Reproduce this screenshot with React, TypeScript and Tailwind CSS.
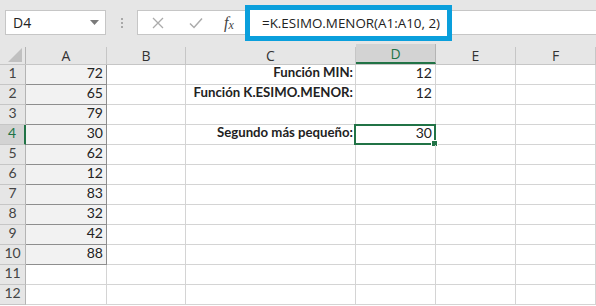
import React from "react";

const colA = [72, 65, 79, 30, 62, 12, 83, 32, 42, 88];

const cLabels: Record<number, string> = {
  1: "Función MIN:",
  2: "Función K.ESIMO.MENOR:",
  4: "Segundo más pequeño:",
};
const dVals: Record<number, string> = { 1: "12", 2: "12", 4: "30" };

function Row({ n }: { n: number }) {
  const active = n === 4;
  const a = n <= 10 ? colA[n - 1] : null;
  return (
    <div className="flex h-[20px] whitespace-nowrap">
      <div
        className={
          "w-[26px] shrink-0 flex items-end justify-center pb-[1px] text-[14px] border-b border-[#c6c6c6] " +
          (active
            ? "bg-[#d3d3d3] text-[#217346] border-r-2 border-r-[#217346]"
            : "bg-[#e6e6e6] text-[#444] border-r border-r-[#b4b4b4]")
        }
      >
        {n}
      </div>
      <div
        className={
          "w-[81px] shrink-0 flex items-end justify-end pr-[3px] pb-[1px] text-[14px] " +
          (a !== null
            ? "bg-[#f2f2f2] border-r border-b border-[#8e8e8e]"
            : "border-r border-b border-[#d4d4d4]")
        }
      >
        {a}
      </div>
      <div className="w-[79px] shrink-0 border-r border-b border-[#d4d4d4]" />
      <div className="w-[170px] shrink-0 border-r border-b border-[#d4d4d4] flex items-end justify-end pr-[2px] pb-[1px] text-[13.2px] font-bold">
        {cLabels[n] ?? ""}
      </div>
      <div className="w-[80px] shrink-0 border-r border-b border-[#d4d4d4] flex items-end justify-end pr-[3px] pb-[1px] text-[14px] relative">
        {dVals[n] ?? ""}
        {active && (
          <>
            <div className="absolute left-[-2px] top-[-1px] w-[82px] h-[21px] border-2 border-[#217346]" />
            <div className="absolute right-[-3px] bottom-[-3px] w-[5px] h-[5px] bg-[#217346] border border-white box-content" />
          </>
        )}
      </div>
      <div className="w-[80px] shrink-0 border-r border-b border-[#d4d4d4]" />
      <div className="w-[80px] shrink-0 border-r border-b border-[#d4d4d4]" />
    </div>
  );
}

export default function App() {
  const headers: { label: string; w: string; sel?: boolean }[] = [
    { label: "A", w: "w-[81px]" },
    { label: "B", w: "w-[79px]" },
    { label: "C", w: "w-[170px]" },
    { label: "D", w: "w-[80px]", sel: true },
    { label: "E", w: "w-[80px]" },
    { label: "F", w: "w-[80px]" },
  ];
  return (
    <div
      className="w-[596px] h-[306px] overflow-hidden bg-white text-[#222] relative"
      style={{ fontFamily: "Lato, 'Open Sans', sans-serif" }}
    >
      {/* Top formula bar */}
      <div className="h-[44px] bg-[#e6e6e6] flex items-start pt-[10px] pl-[5px]">
        <div
          className="w-[101px] h-[25px] bg-white border border-[#c6c6c6] flex items-center pl-[7px] pr-[6px] text-[14px] text-[#222]"
          style={{ fontFamily: "'Open Sans', sans-serif" }}
        >
          <span className="flex-1">D4</span>
          <svg width="9" height="5" viewBox="0 0 9 5">
            <path d="M0 0 L9 0 L4.5 5 Z" fill="#7a7a7a" />
          </svg>
        </div>
        <div className="w-[31px] h-[25px] flex flex-col items-center justify-center gap-[2px]">
          <div className="w-[2px] h-[2px] bg-[#a8a8a8]" />
          <div className="w-[2px] h-[2px] bg-[#a8a8a8]" />
          <div className="w-[2px] h-[2px] bg-[#a8a8a8]" />
        </div>
        <div className="flex-1 h-[25px] bg-white border border-[#c6c6c6] border-r-0 flex items-center">
          <div className="w-[40px] flex justify-center">
            <svg width="12" height="12" viewBox="0 0 12 12">
              <path d="M1 1 L11 11 M11 1 L1 11" stroke="#ababab" strokeWidth="1.3" />
            </svg>
          </div>
          <div className="w-[36px] flex justify-center">
            <svg width="14" height="12" viewBox="0 0 14 12">
              <path d="M1 6.5 L5 10.5 L13 1.5" stroke="#ababab" strokeWidth="1.5" fill="none" />
            </svg>
          </div>
          <div
            className="w-[30px] flex justify-center items-baseline italic text-[#444]"
            style={{ fontFamily: "'Liberation Serif', serif" }}
          >
            <span className="text-[16px]">f</span>
            <span className="text-[12px] relative top-[1px]">x</span>
          </div>
        </div>
      </div>

      {/* Blue highlight around formula */}
      <div
        className="absolute left-[245px] top-[5px] w-[207px] h-[36px] border-[5px] border-[#0a9fdc] bg-white flex items-center pl-[12px] text-[13.4px] text-[#222] whitespace-nowrap"
        style={{ fontFamily: "'Open Sans', sans-serif" }}
      >
        =K.ESIMO.MENOR(A1:A10, 2)
      </div>

      {/* Column header row */}
      <div className="flex h-[21px] bg-[#e6e6e6] border-b border-[#c6c6c6]">
        <div className="w-[26px] shrink-0 border-r border-[#b4b4b4] mt-[3px] flex items-end justify-end pr-[3px] pb-[2px]">
          <svg width="14" height="14" viewBox="0 0 14 14">
            <path d="M14 0 L14 14 L0 14 Z" fill="#c0c0c0" />
          </svg>
        </div>
        {headers.map((h) => (
          <div
            key={h.label}
            className={
              h.w +
              " shrink-0 flex items-center justify-center text-[14px] " +
              (h.sel
                ? "bg-[#d3d3d3] text-[#217346] border-b-2 border-[#217346] border-r border-r-[#b4b4b4]"
                : "text-[#333] border-r border-[#c6c6c6] mt-[3px]")
            }
            style={{ fontFamily: "'Open Sans', sans-serif" }}
          >
            {h.label}
          </div>
        ))}
      </div>

      {Array.from({ length: 12 }, (_, i) => (
        <Row key={i + 1} n={i + 1} />
      ))}
    </div>
  );
}
